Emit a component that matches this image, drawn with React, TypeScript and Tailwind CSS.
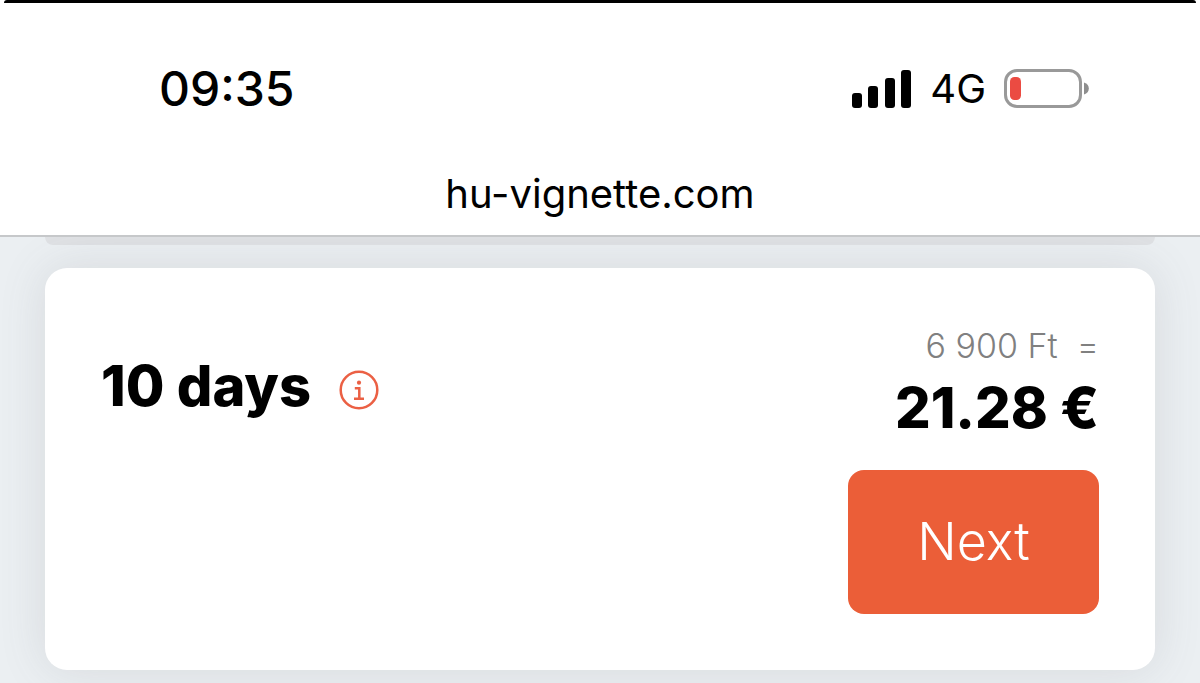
import React from 'react';

const SignalIcon = () => (
  <svg width="60" height="38" viewBox="0 0 60 38" fill="#000" role="img" aria-label="Signal strength">
    <rect x="0" y="23" width="10" height="15" rx="3" />
    <rect x="16" y="16" width="10" height="22" rx="3" />
    <rect x="33" y="8" width="10" height="30" rx="3" />
    <rect x="49" y="0" width="10" height="38" rx="3" />
  </svg>
);

const BatteryIcon = () => (
  <svg width="86" height="40" viewBox="0 0 86 40" fill="none" role="img" aria-label="Battery low">
    <rect x="1.5" y="1.5" width="75" height="36" rx="11.5" stroke="#999" strokeWidth="3" />
    <rect x="6" y="8" width="11" height="23" rx="4.5" fill="#eb4b42" />
    <path d="M80 13.5c3.200 1 4.800 3.300 4.800 6s-1.600 5-4.800 6z" fill="#8e8e8e" />
  </svg>
);

const InfoIcon = () => (
  <svg width="40" height="40" viewBox="0 0 40 40" fill="none" stroke="#eb6044" strokeWidth="2.500">
    <circle cx="20" cy="20" r="18.300" />
    <circle cx="20" cy="12.700" r="2.100" fill="#eb6044" stroke="none" />
    <path d="M15.800 18.200h4.500v10.400M15 28.800h10" />
  </svg>
);

interface VignetteCardProps {
  period: string;
  localPrice: string;
  price: string;
}

const VignetteCard: React.FC<VignetteCardProps> = ({ period, localPrice, price }) => (
  <section className="mx-[45px] mt-[23px] flex items-start justify-between rounded-[22px] bg-white p-14 shadow-[0_0_48px_rgba(90,95,100,0.14)]">
    <div className="flex items-center gap-7 pt-[30px]">
      <h2 className="text-[56px] leading-16 font-extrabold">{period}</h2>
      <button type="button" aria-label={`About ${period}`} className="pt-2">
        <InfoIcon />
      </button>
    </div>
    <div className="flex flex-col items-end">
      <p className="text-[34px] leading-11 font-light whitespace-pre text-[#808080]">{localPrice}{'  ='}</p>
      <p className="text-[56px] leading-20 font-extrabold">{price}</p>
      <button
        type="button"
        className="mt-[22px] min-w-[251px] rounded-[16px] bg-[#eb5e38] px-16 py-10 text-[52px] leading-16 font-light text-white"
      >
        Next
      </button>
    </div>
  </section>
);

export default function App() {
  return (
    <div className="min-h-screen overflow-hidden bg-[#ebeff2] pb-3 font-['Inter',sans-serif] text-black">
      <header className="relative border-b-2 border-[#c6c8ca] bg-white">
        <div className="mx-1 h-[3px] rounded-t-sm bg-black" />
        <div className="flex items-center justify-between pt-[54px] pr-[110px] pl-[159px]">
          <time className="text-[48px] leading-16 font-medium">09:35</time>
          <div className="flex items-center gap-[18px]">
            <SignalIcon />
            <span className="text-[40px] leading-16">4G</span>
            <BatteryIcon />
          </div>
        </div>
        <p className="pt-[45px] pb-[13px] text-center text-[40px] leading-14">hu-vignette.com</p>
      </header>
      <main>
        {/* bottom edge of the previous card */}
        <div className="mx-[45px] h-2 rounded-b-[22px] bg-[#dfe1e4]" />
        <VignetteCard period="10 days" localPrice="6 900 Ft" price="21.28 €" />
      </main>
    </div>
  );
}
